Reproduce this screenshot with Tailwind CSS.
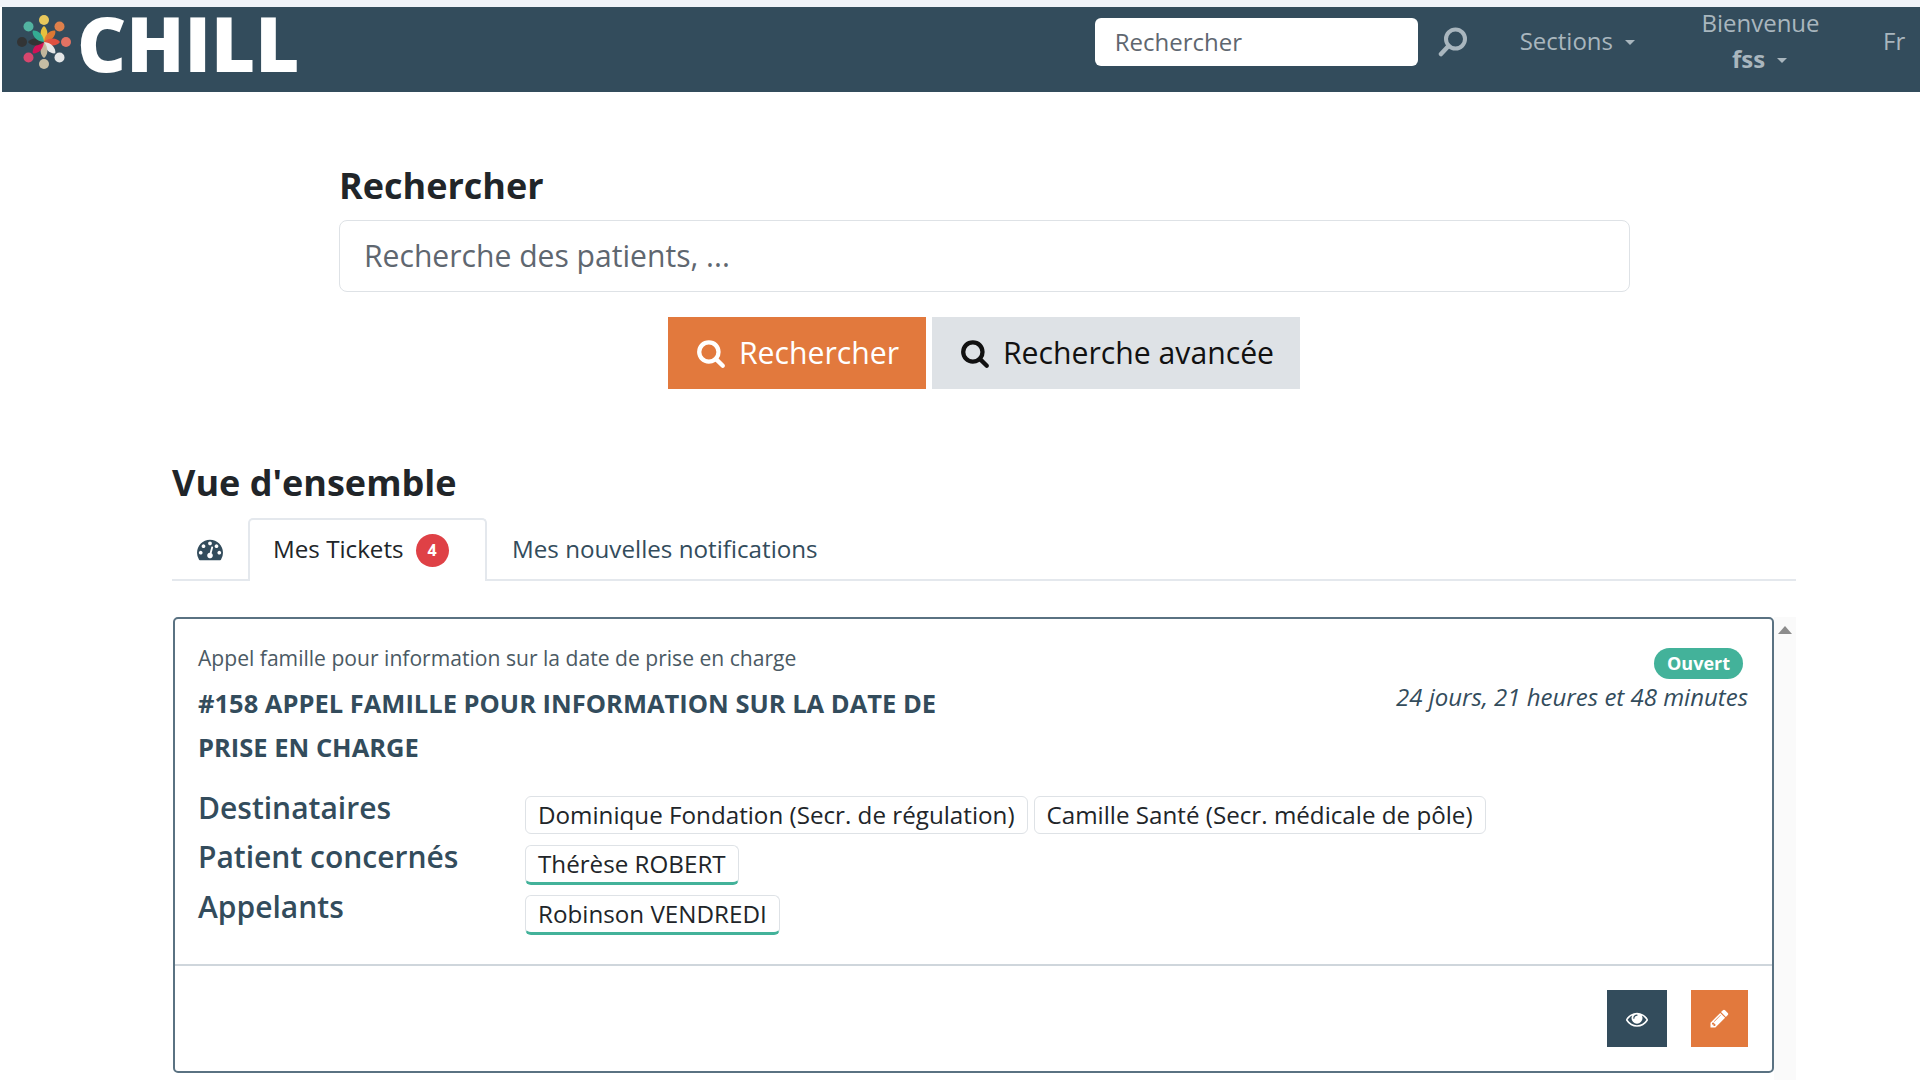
<!DOCTYPE html>
<html lang="fr">
<head>
  <meta charset="UTF-8">
  <title>Chill - Rechercher</title>
  <script src="https://cdn.jsdelivr.net/npm/@tailwindcss/browser@4"></script>
</head>
<body class="bg-white font-['Open_Sans',sans-serif] text-[#212529] overflow-hidden">
  <div class="h-[1080px] overflow-hidden">

    <!-- Top bar -->
    <div class="h-[7px] bg-[#f0f3f8]"></div>
    <nav class="ml-[2px] h-[85px] bg-[#334c5c] flex items-start text-[#a9b6be]">
      <svg class="ml-[14px] mt-[7px] w-[56px] h-[56px] shrink-0" viewBox="-28 -28 56 56">
        <g fill-opacity="0.95">
          <circle cx="0" cy="-22" r="5" fill="#f2cf5c"/>
          <circle cx="15.5" cy="-15.5" r="5" fill="#e8834a"/>
          <circle cx="22" cy="0" r="5" fill="#ec7463"/>
          <circle cx="15.5" cy="15.5" r="5" fill="#eeeeee"/>
          <circle cx="0" cy="22" r="5" fill="#cfc3a8"/>
          <circle cx="-15.5" cy="15.5" r="5" fill="#e0476f"/>
          <circle cx="-22" cy="0" r="5" fill="#333333"/>
          <circle cx="-15.5" cy="-15.5" r="5" fill="#54b8a4"/>
          <path d="M0 0C-5 -6 -4 -13 0 -16C4 -13 5 -6 0 0Z" fill="#f0c63c"/>
          <path d="M0 0C-5 -6 -4 -13 0 -16C4 -13 5 -6 0 0Z" fill="#e77a30" transform="rotate(45)"/>
          <path d="M0 0C-5 -6 -4 -13 0 -16C4 -13 5 -6 0 0Z" fill="#e8503f" transform="rotate(90)"/>
          <path d="M0 0C-5 -6 -4 -13 0 -16C4 -13 5 -6 0 0Z" fill="#eeeeee" transform="rotate(135)"/>
          <path d="M0 0C-5 -6 -4 -13 0 -16C4 -13 5 -6 0 0Z" fill="#c9bc9f" transform="rotate(180)"/>
          <path d="M0 0C-5 -6 -4 -13 0 -16C4 -13 5 -6 0 0Z" fill="#d90f55" transform="rotate(225)"/>
          <path d="M0 0C-5 -6 -4 -13 0 -16C4 -13 5 -6 0 0Z" fill="#333333" transform="rotate(270)"/>
          <path d="M0 0C-5 -6 -4 -13 0 -16C4 -13 5 -6 0 0Z" fill="#35b096" transform="rotate(315)"/>
        </g>
      </svg>
      <span class="ml-[5px] text-[76px] leading-[72px] font-extrabold text-white">CHILL</span>

      <div class="ml-auto mt-[11px] w-[323px] h-[48px] rounded-[6px] bg-white text-[#5f6770] text-[24px] leading-[48px] pl-[20px]">Rechercher</div>
      <svg class="ml-[20px] mt-[19px] w-[32px] h-[32px]" viewBox="0 0 32 32" fill="none" stroke="#a9b6be">
        <circle cx="17.5" cy="13" r="9.5" stroke-width="4"/>
        <path d="M10.5 20L3 28" stroke-width="4.5" stroke-linecap="round"/>
      </svg>
      <div class="ml-[50px] mt-[14px] flex items-center h-[40px] text-[24px]">Sections<span class="ml-[12px] mt-[2px] border-x-[5px] border-t-[5px] border-x-transparent border-t-[#a9b6be]"></span></div>
      <div class="ml-[66px] mt-[-2px] w-[119px] text-center text-[24px] leading-[36px]">
        <div class="whitespace-nowrap">Bienvenue</div>
        <div class="pr-[2px] font-bold flex items-center justify-center">fss<span class="ml-[12px] mt-[2px] border-x-[5px] border-t-[5px] border-x-transparent border-t-[#a9b6be]"></span></div>
      </div>
      <div class="ml-[63px] mt-[14px] flex items-center h-[40px] w-[37px] text-[24px]">Fr</div>
    </nav>

    <!-- Search -->
    <section class="ml-[339px] w-[1291px] pt-[70px]">
      <h2 class="text-[36px] leading-[48px] font-bold">Rechercher</h2>
      <div class="mt-[10px] h-[72px] rounded-[8px] border border-[#dee2e6] text-[#5f6770] text-[30.1px] leading-[70px] pl-[24px]">Recherche des patients, ...</div>
      <div class="mt-[25px] pr-[2px] flex justify-center gap-[6px] text-[30.2px]">
        <button class="w-[258px] h-[72px] pb-[1px] pl-[2px] bg-[#e2793d] text-white flex items-center justify-center gap-[13px]">
          <svg class="w-[30px] h-[30px]" viewBox="0 0 1792 1792" fill="currentColor"><path d="M1216 832q0-185-131.5-316.5t-316.5-131.5-316.5 131.5-131.5 316.5 131.5 316.5 316.5 131.5 316.5-131.5 131.5-316.5zm512 832q0 52-38 90t-90 38q-54 0-90-38l-343-342q-179 124-399 124-143 0-273.5-55.5t-225-150-150-225-55.5-273.5 55.5-273.5 150-225 225-150 273.5-55.5 273.5 55.5 225 150 150 225 55.5 273.5q0 220-124 399l343 343q37 37 37 90z"/></svg>
          Rechercher
        </button>
        <button class="w-[368px] h-[72px] pb-[1px] pl-[3px] bg-[#dee2e6] text-[#111] flex items-center justify-center gap-[13px]">
          <svg class="w-[30px] h-[30px]" viewBox="0 0 1792 1792" fill="currentColor"><path d="M1216 832q0-185-131.5-316.5t-316.5-131.5-316.5 131.5-131.5 316.5 131.5 316.5 316.5 131.5 316.5-131.5 131.5-316.5zm512 832q0 52-38 90t-90 38q-54 0-90-38l-343-342q-179 124-399 124-143 0-273.5-55.5t-225-150-150-225-55.5-273.5 55.5-273.5 150-225 225-150 273.5-55.5 273.5 55.5 225 150 150 225 55.5 273.5q0 220-124 399l343 343q37 37 37 90z"/></svg>
          Recherche avancée
        </button>
      </div>
    </section>

    <!-- Overview -->
    <section class="ml-[172px] w-[1624px] mt-[70px]">
      <h2 class="text-[36px] leading-[48px] font-bold">Vue d'ensemble</h2>

      <div class="mt-[11px] h-[63px] flex border-b-2 border-[#e4e8ed] text-[24.2px]">
        <div class="w-[76px] flex items-center justify-center text-[#334c5c]">
          <svg class="w-[26px] h-[26px]" viewBox="0 0 1792 1792" fill="currentColor"><path d="M384 1152q0-53-37.5-90.5t-90.5-37.5-90.5 37.5-37.5 90.5 37.5 90.5 90.5 37.5 90.5-37.5 37.5-90.5zm192-448q0-53-37.5-90.5t-90.5-37.5-90.5 37.5-37.5 90.5 37.5 90.5 90.5 37.5 90.5-37.5 37.5-90.5zm428 481l101-382q6-26-7.5-48.5t-38.5-29.5-48 6.5-30 39.5l-101 382q-60 5-107 43.5t-63 98.5q-20 77 20 146t117 89 146-20 89-117q16-60-6-117t-72-91zm660-33q0-53-37.5-90.5t-90.5-37.5-90.5 37.5-37.5 90.5 37.5 90.5 90.5 37.5 90.5-37.5 37.5-90.5zm-640-640q0-53-37.5-90.5t-90.5-37.5-90.5 37.5-37.5 90.5 37.5 90.5 90.5 37.5 90.5-37.5 37.5-90.5zm448 192q0-53-37.5-90.5t-90.5-37.5-90.5 37.5-37.5 90.5 37.5 90.5 90.5 37.5 90.5-37.5 37.5-90.5zm320 448q0 261-141 483-19 29-54 29h-1402q-35 0-54-29-141-221-141-483 0-182 71-348t191-286 286-191 348-71 348 71 286 191 191 286 71 348z"/></svg>
        </div>
        <div class="w-[239px] h-[63px] pb-[3px] bg-white border-2 border-b-0 border-[#e4e8ed] rounded-t-[5px] flex items-center pl-[23px]">
          Mes Tickets
          <span class="ml-[12px] mt-[2px] w-[33px] h-[33px] rounded-full bg-[#df4146] text-white text-[16px] font-bold flex items-center justify-center">4</span>
        </div>
        <div class="ml-[25px] pt-[1px] flex items-center text-[#334c5c]">Mes nouvelles notifications</div>
      </div>

      <div class="mt-[36px] ml-px flex">
        <!-- Ticket card -->
        <article class="w-[1601px] h-[456px] border-2 border-[#5a7282] rounded-[5px] flex flex-col">
          <div class="flex-1 px-[23px] pt-[24px]">
            <div class="flex justify-between">
              <div>
                <p class="text-[21.1px] leading-[30px] text-[#4b5a64]">Appel famille pour information sur la date de prise en charge</p>
                <h3 class="mt-[8px] w-[760px] text-[25.5px] leading-[44px] font-bold text-[#334c5c]">#158 APPEL FAMILLE POUR INFORMATION SUR LA DATE DE PRISE EN CHARGE</h3>
              </div>
              <div class="pt-[5px] pr-[1px] flex flex-col items-end">
                <span class="mr-[5px] h-[31px] w-[89px] rounded-full bg-[#43b29a] text-white text-[18px] font-bold flex items-center justify-center">Ouvert</span>
                <span class="text-[24px] leading-[36px] italic text-[#334c5c]">24 jours, 21 heures et 48 minutes</span>
              </div>
            </div>
            <dl class="mt-[20px] grid grid-cols-[327px_1fr] auto-rows-[50px] text-[#334c5c]">
              <dt class="-mt-[1px] text-[30px] leading-[40px] font-semibold">Destinataires</dt>
              <dd class="pt-[7px] flex items-start gap-[6px]">
                <span class="h-[38px] px-[12px] rounded-[6px] border border-[#dee2e6] text-[24.2px] leading-[36px] text-[#212529]">Dominique Fondation (Secr. de régulation)</span>
                <span class="h-[38px] px-[12px] rounded-[6px] border border-[#dee2e6] text-[24.2px] leading-[36px] text-[#212529]">Camille Santé (Secr. médicale de pôle)</span>
              </dd>
              <dt class="-mt-[2px] text-[30px] leading-[40px] font-semibold">Patient concernés</dt>
              <dd class="pt-[6px] flex items-start">
                <span class="h-[40px] px-[12px] rounded-[6px] border border-[#dee2e6] border-b-[3px] border-b-[#43b29a] text-[24.2px] leading-[36px] text-[#212529]">Thérèse ROBERT</span>
              </dd>
              <dt class="-mt-[2px] text-[30px] leading-[40px] font-semibold">Appelants</dt>
              <dd class="pt-[6px] flex items-start">
                <span class="h-[40px] px-[12px] rounded-[6px] border border-[#dee2e6] border-b-[3px] border-b-[#43b29a] text-[24.2px] leading-[36px] text-[#212529]">Robinson VENDREDI</span>
              </dd>
            </dl>
          </div>
          <div class="h-[107px] shrink-0 border-t-2 border-[#cfd6dc] flex justify-end items-start gap-[24px] pt-[24px] pr-[24px]">
            <button class="w-[60px] h-[57px] bg-[#334c5c] text-white flex items-center justify-center">
              <svg class="w-[22px] h-[22px]" viewBox="0 0 1792 1792" fill="currentColor"><path d="M1664 960q-152-236-381-353 61 104 61 225 0 185-131.5 316.5t-316.5 131.5-316.5-131.5-131.5-316.5q0-121 61-225-229 117-381 353 133 205 333.5 326.5t434.5 121.5 434.5-121.5 333.5-326.5zm-720-384q0-20-14-34t-34-14q-125 0-214.5 89.5t-89.5 214.5q0 20 14 34t34 14 34-14 14-34q0-86 61-147t147-61q20 0 34-14t14-34zm848 384q0 34-20 69-140 230-376.5 368.5t-499.5 138.5-499.5-139-376.5-368q-20-35-20-69t20-69q140-229 376.5-368t499.5-139 499.5 139 376.5 368q20 35 20 69z"/></svg>
            </button>
            <button class="w-[57px] h-[57px] bg-[#e2793d] text-white flex items-center justify-center">
              <svg class="w-[21px] h-[21px]" viewBox="0 0 1792 1792" fill="currentColor"><path d="M491 1536l91-91-235-235-91 91v107h128v128h107zm523-928q0-22-22-22-10 0-17 7l-542 542q-7 7-7 17 0 22 22 22 10 0 17-7l542-542q7-7 7-17zm-54-192l416 416-832 832h-416v-416zm683 96q0 53-37 90l-166 165-416-416 165-166q36-37 90-37 53 0 91 37l235 234q37 38 37 91z"/></svg>
            </button>
          </div>
        </article>
        <!-- Scrollbar -->
        <div class="w-[22px] h-[463px] bg-[#fafafa] flex justify-center pt-[9px]">
          <span class="h-0 border-x-[7px] border-b-[8px] border-x-transparent border-b-[#8c8c8c]"></span>
        </div>
      </div>
    </section>
  </div>
</body>
</html>
